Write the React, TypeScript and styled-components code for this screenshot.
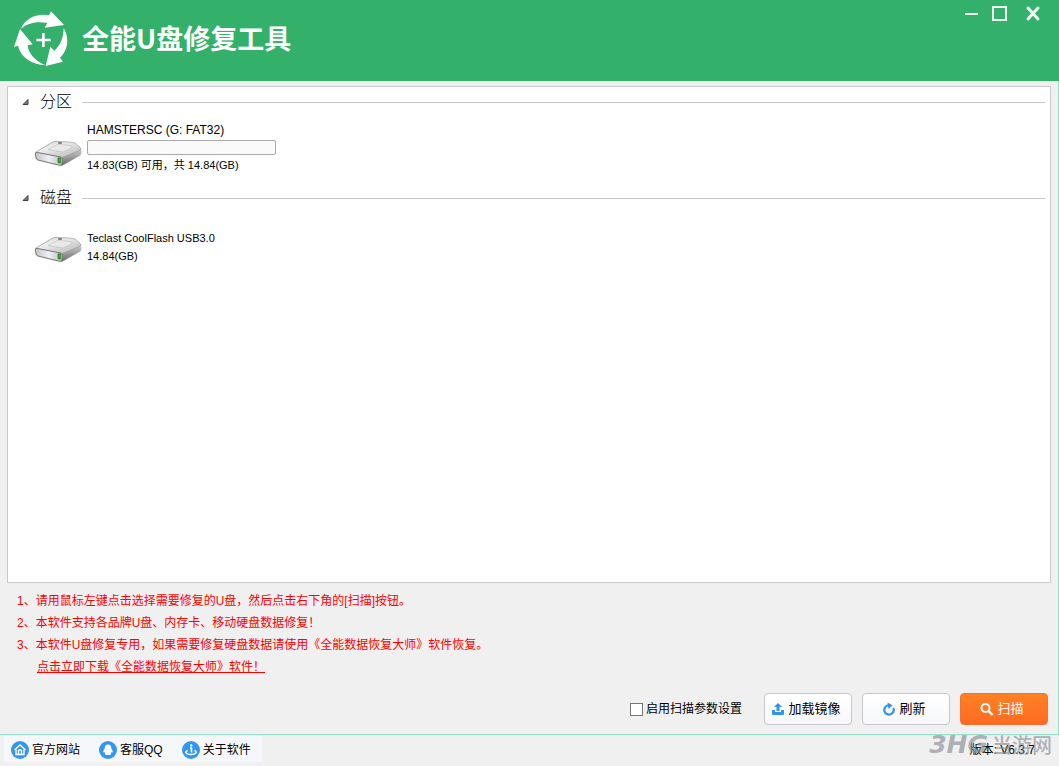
import React from "react";
import styled, { createGlobalStyle } from "styled-components";

const GlobalStyle = createGlobalStyle`
  *, *::before, *::after { box-sizing: border-box; }
  body {
    margin: 0;
    background: #f0f0f0;
    color: #000;
    font: 12px/18px "Liberation Sans", "Noto Sans CJK SC", sans-serif;
  }
  button, input { font: inherit; }
`;

const Window = styled.div`
  display: flex;
  flex-direction: column;
  min-height: 100vh;
`;

const TitleBar = styled.header`
  display: flex;
  align-items: flex-start;
  height: 81px;
  padding-left: 12px;
  background: #33b16b;
  color: #fff;
`;

const Logo = styled.svg`
  width: 58px;
  height: 58px;
  margin-top: 10px;
  flex: none;
`;

const Title = styled.h1`
  flex: 1;
  margin: 18px 0 0 12px;
  font: bold 27px/40px "Noto Sans CJK SC", sans-serif;
`;

const WindowControls = styled.div`
  display: flex;
  padding: 4px 18px 0 0;
  gap: 13px;
`;

const ControlButton = styled.button`
  display: flex;
  padding: 0;
  border: 0;
  background: none;
  color: #f4fff4;
  cursor: pointer;
`;

const Body = styled.main`
  flex: 1;
  display: flex;
  flex-direction: column;
  padding: 5px 7px 9px 7px;
  border-right: 1px solid #8fe6c6;
  border-bottom: 1px solid #8fe6c6;
`;

const DevicePanel = styled.div`
  flex: 1;
  padding: 4px 5px 0 12px;
  border: 1px solid #c8cacf;
  background: #fff;
`;

const Group = styled.section`
  min-height: 96px;
`;

const GroupHeader = styled.div`
  display: flex;
  align-items: center;
  height: 22px;
  &::after {
    content: "";
    flex: 1;
    margin-left: 10px;
    border-top: 1px solid #c8c8c8;
  }
`;

const Triangle = styled.svg`
  width: 8px;
  height: 8px;
  margin-left: 1px;
`;

const GroupTitle = styled.h2`
  margin: 0 0 0 11px;
  padding-bottom: 4px;
  font: 300 16px/18px "Noto Sans CJK SC", sans-serif;
`;

const Device = styled.div`
  display: flex;
  align-items: flex-start;
  gap: 5px;
  padding: 8px 0 0 14px;
`;

const DriveIcon = styled.svg`
  width: 48px;
  height: 30px;
  margin-top: 17px;
  flex: none;
`;

const DeviceInfo = styled.div<{ $pushed?: boolean }>`
  padding-top: ${(p) => (p.$pushed ? 12 : 0)}px;
  font-size: 11px;
`;

const DeviceName = styled.div<{ $large?: boolean }>`
  font-size: ${(p) => (p.$large ? 12 : 11)}px;
`;

const Capacity = styled.div`
  width: 189px;
  height: 15px;
  margin: 1px 0;
  border: 1px solid #aaa;
  border-radius: 2px;
  background: #fafafa;
`;

const Hints = styled.ol`
  margin: 0;
  padding: 7px 10px 0;
  list-style: none;
  line-height: 22px;
  color: #f00;
`;

const DownloadLink = styled.a`
  margin-left: 20px;
  color: #f00;
  text-decoration: underline 1px #f00;
  text-underline-offset: 1px;
`;

const Actions = styled.div`
  display: flex;
  justify-content: flex-end;
  align-items: center;
  gap: 10px;
  margin-top: 15px;
  padding-right: 3px;
`;

const ScanOption = styled.label`
  display: flex;
  align-items: center;
  gap: 3px;
  margin-right: 12px;
`;

const CheckBox = styled.input`
  appearance: none;
  width: 13px;
  height: 13px;
  margin: 0;
  border: 1px solid #777;
  background: #fff;
  &:checked { background: #2f8fe6; }
`;

const ActionButton = styled.button<{ $primary?: boolean }>`
  display: flex;
  align-items: center;
  justify-content: center;
  gap: 3px;
  width: 88px;
  height: 32px;
  padding: 0 4px 0 0;
  border: 1px solid ${(p) => (p.$primary ? "#f9702a" : "#c5c7ca")};
  border-radius: 4px;
  background: ${(p) =>
    p.$primary
      ? "linear-gradient(#ff8124, #ff6a22)"
      : "linear-gradient(#ffffff, #f7f8fb)"};
  color: ${(p) => (p.$primary ? "#fff" : "#000")};
  font-size: 13px;
  cursor: pointer;
`;

const Footer = styled.footer`
  position: relative;
  display: flex;
  justify-content: space-between;
  height: 31px;
  padding: 0 24px 4px 4px;
`;

const FooterNav = styled.nav`
  display: flex;
  align-items: center;
  gap: 19px;
  padding: 2px 11px 0 7px;
  background: #f6f7fa;
`;

const FooterLink = styled.a`
  display: flex;
  align-items: center;
  gap: 3px;
  color: #000;
  text-decoration: none;
`;

const Version = styled.span`
  align-self: center;
  padding-top: 2px;
`;

const Watermark = styled.div`
  position: absolute;
  right: 7px;
  top: -4px;
  display: flex;
  align-items: center;
  gap: 4px;
  color: #8d8f94;
  opacity: 0.65;
  font: 500 20px/28px "Noto Sans CJK SC", sans-serif;
  pointer-events: none;
`;

const WatermarkMark = styled.span`
  font: italic bold 25px/28px "DejaVu Sans", sans-serif;
`;

function RecycleLogo() {
  return (
    <Logo viewBox="36 30 174 174" fill="#fff" aria-hidden="true">
      <path d="M62 87C77 54 110 39 147 46L153 34L192 75L134 83L142 69C112 63 83 68 62 87Z" />
      <path d="M191 84C209 116 204 150 180 173L189 185L137 198L151 140L163 152C182 135 191 111 191 84Z" />
      <path d="M136 195C96 194 62 172 54 137L42 141L60 87L98 133L83 136C86 162 106 184 136 195Z" />
      <path d="M126 99h8v17h18v8h-18v17h-8v-17h-17v-8h17z" />
    </Logo>
  );
}

function Drive() {
  return (
    <DriveIcon viewBox="18 24 144 90" aria-hidden="true">
      <defs>
        <linearGradient id="driveTop" x1="0" y1="0" x2="1" y2="1">
          <stop offset="0" stopColor="#b9b9b9" />
          <stop offset=".35" stopColor="#eeeeee" />
          <stop offset=".65" stopColor="#d2d2d2" />
          <stop offset="1" stopColor="#b5b5b5" />
        </linearGradient>
        <linearGradient id="driveSide" x1="0" y1="0" x2="0" y2="1">
          <stop offset="0" stopColor="#cfcfcf" />
          <stop offset="1" stopColor="#6b6b6b" />
        </linearGradient>
        <linearGradient id="driveFront" x1="0" y1="0" x2="1" y2="0">
          <stop offset="0" stopColor="#c2c3cb" />
          <stop offset=".5" stopColor="#f0f0f8" />
          <stop offset="1" stopColor="#b8b9c2" />
        </linearGradient>
      </defs>
      <path d="M26 90L100 109L160 76L150 70L60 84Z" fill="#d9d9d9" />
      <path d="M100 80L158 56Q161 60 160 70Q159 74 154 77L106 105Q102 107 98 106Z" fill="url(#driveSide)" />
      <path d="M22 67L72 37Q78 34 86 34L134 37Q140 38 145 42L157 53Q161 57 156 61L108 81Q102 84 94 83L26 70Z" fill="url(#driveTop)" stroke="#999" strokeWidth="2" />
      <path d="M60 59L88 43L124 46L134 52L104 66Z" fill="#e8e8e8" stroke="#c3c3c3" strokeWidth="2" />
      <path d="M26 67L98 81Q103 82 103 87L102 101Q101 107 95 106L30 90Q25 89 24 84L22 72Q22 67 26 67Z" fill="url(#driveFront)" stroke="#777" strokeWidth="3" />
      <ellipse cx="96" cy="39" rx="7" ry="2.5" fill="#555" />
      <path d="M90 84L97 83V99L90 98Z" fill="#22c414" stroke="#176c10" strokeWidth="2" />
    </DriveIcon>
  );
}

function GroupHeading({ children }: { children: React.ReactNode }) {
  return (
    <GroupHeader>
      <Triangle viewBox="0 0 8 8" aria-hidden="true">
        <path d="M7 1.5v5H2z" fill="#777" stroke="#444" />
      </Triangle>
      <GroupTitle>{children}</GroupTitle>
    </GroupHeader>
  );
}

function NavIcon({ children }: { children: React.ReactNode }) {
  return (
    <svg width="18" height="18" viewBox="0 0 18 18" fill="none" stroke="#fff" aria-hidden="true">
      <circle cx="9" cy="9" r="9" fill="#3397ee" stroke="none" />
      {children}
    </svg>
  );
}

export default function App() {
  return (
    <>
      <GlobalStyle />
      <Window>
        <TitleBar>
          <RecycleLogo />
          <Title>全能U盘修复工具</Title>
          <WindowControls>
            <ControlButton aria-label="最小化">
              <svg width="14" height="20" viewBox="0 0 14 20">
                <path d="M0 10H13" stroke="currentColor" strokeWidth="2" />
              </svg>
            </ControlButton>
            <ControlButton aria-label="最大化">
              <svg width="16" height="20" viewBox="0 0 16 20">
                <path d="M1 3H14V16H1Z" fill="none" stroke="currentColor" strokeWidth="2" />
              </svg>
            </ControlButton>
            <ControlButton aria-label="关闭">
              <svg width="20" height="20" viewBox="0 0 20 20">
                <path d="M7 4L17 15M17 4L7 15" stroke="currentColor" strokeWidth="3" strokeLinecap="round" />
              </svg>
            </ControlButton>
          </WindowControls>
        </TitleBar>

        <Body>
          <DevicePanel>
            <Group>
              <GroupHeading>分区</GroupHeading>
              <Device>
                <Drive />
                <DeviceInfo>
                  <DeviceName $large>HAMSTERSC (G: FAT32)</DeviceName>
                  <Capacity role="progressbar" aria-valuenow={0} aria-label="已用空间" />
                  <div>14.83(GB) 可用，共 14.84(GB)</div>
                </DeviceInfo>
              </Device>
            </Group>
            <Group>
              <GroupHeading>磁盘</GroupHeading>
              <Device>
                <Drive />
                <DeviceInfo $pushed>
                  <DeviceName>Teclast CoolFlash USB3.0</DeviceName>
                  <div>14.84(GB)</div>
                </DeviceInfo>
              </Device>
            </Group>
          </DevicePanel>

          <Hints>
            <li>1、请用鼠标左键点击选择需要修复的U盘，然后点击右下角的[扫描]按钮。</li>
            <li>2、本软件支持各品牌U盘、内存卡、移动硬盘数据修复！</li>
            <li>3、本软件U盘修复专用，如果需要修复硬盘数据请使用《全能数据恢复大师》软件恢复。</li>
            <li>
              <DownloadLink href="#download">点击立即下载《全能数据恢复大师》软件！</DownloadLink>
            </li>
          </Hints>

          <Actions>
            <ScanOption>
              <CheckBox type="checkbox" />
              启用扫描参数设置
            </ScanOption>
            <ActionButton>
              <svg width="14" height="14" viewBox="0 0 14 14" fill="#3294e8" aria-hidden="true">
                <path d="M7 1L11 5H8.5V9H5.5V5H3Z" />
                <path d="M1 8H4V10H10V8H13V12Q13 13 12 13H2Q1 13 1 12Z" />
              </svg>
              加载镜像
            </ActionButton>
            <ActionButton>
              <svg width="14" height="14" viewBox="0 0 14 14" aria-hidden="true">
                <path d="M11.3 6A4.7 4.7 0 1 1 6 3.3" fill="none" stroke="#3294e8" strokeWidth="2.2" />
                <path d="M5.5 0.5L10.5 3.2L6.5 7Z" fill="#3294e8" />
              </svg>
              刷新
            </ActionButton>
            <ActionButton $primary>
              <svg width="14" height="14" viewBox="0 0 14 14" fill="none" stroke="#fff" strokeWidth="2" aria-hidden="true">
                <circle cx="5.5" cy="6" r="4" />
                <path d="M8.5 9L12.5 13" strokeWidth="2.4" />
              </svg>
              扫描
            </ActionButton>
          </Actions>
        </Body>

        <Footer>
          <FooterNav>
            <FooterLink href="#site">
              <NavIcon>
                <path d="M3.5 9L9 4L14.5 9M5 8.5V13.5H13V8.5M7.5 13V9.5Q9 8 10.5 9.5V13" strokeWidth="1.4" />
              </NavIcon>
              官方网站
            </FooterLink>
            <FooterLink href="#qq">
              <NavIcon>
                <path d="M9 3.5Q12.3 3.5 12.3 7.5Q14 9.5 13.6 11.5L12.5 11L12 12.5Q12.5 14 9 14Q5.5 14 6 12.5L5.5 11L4.4 11.5Q4 9.5 5.7 7.5Q5.7 3.5 9 3.5Z" fill="#fff" stroke="none" />
              </NavIcon>
              客服QQ
            </FooterLink>
            <FooterLink href="#about">
              <NavIcon>
                <path d="M8 7H9.5V11.5M5.5 9.5Q2.5 11 5 12.6Q9 14.5 13 12.6Q15.5 11 12.5 9.5" strokeWidth="1.6" />
                <circle cx="9.2" cy="4.4" r="1.2" fill="#fff" stroke="none" />
              </NavIcon>
              关于软件
            </FooterLink>
          </FooterNav>
          <Version>版本: V6.3.7</Version>
          <Watermark>
            <WatermarkMark>3HG</WatermarkMark>
            <span>当游网</span>
          </Watermark>
        </Footer>
      </Window>
    </>
  );
}
